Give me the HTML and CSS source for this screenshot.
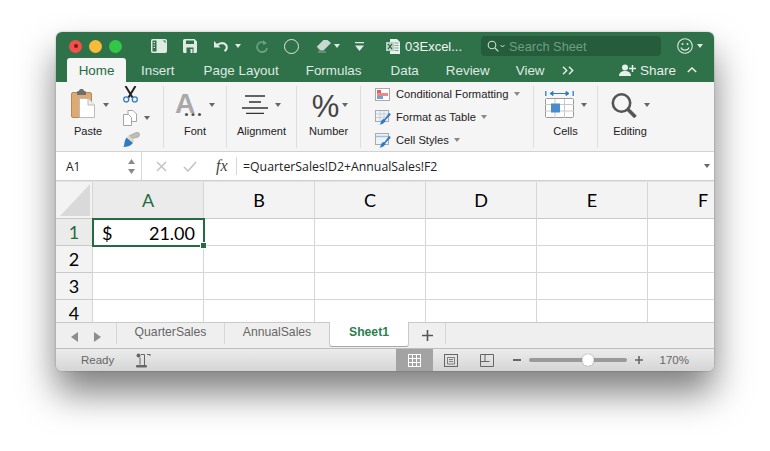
FILE: index.html
```html
<!DOCTYPE html>
<html lang="en">
<head>
    <meta charset="UTF-8">
    <title>03Excel</title>
    <link rel="stylesheet" href="styles.css">
</head>
<body>
<div class="window">
    <div class="titlebar">
        <div class="lights">
            <span class="light red"><i></i></span>
            <span class="light yellow"></span>
            <span class="light green"></span>
        </div>
        <div class="quick">
            <svg class="q-sidebar" width="16" height="14" viewBox="0 0 16 14"><rect x=".75" y=".75" width="14.5" height="12.5" rx="1" fill="none" stroke="#dfeae3" stroke-width="1.5"/><path d="M5.5 1h6l3.5 3.500v8.500h-9.500z" fill="#dfeae3"/><path d="M2.500 3.500h1.500M2.500 6h1.500M2.500 8.500h1.500" stroke="#dfeae3"/></svg>
            <svg class="q-save" width="14" height="14" viewBox="0 0 14 14"><path d="M1.500 0h10l2.500 2.500v10a1.500 1.500 0 0 1-1.500 1.500h-11a1.500 1.500 0 0 1-1.500-1.500v-11a1.500 1.500 0 0 1 1.500-1.500z" fill="#dfeae3"/><rect x="3" y="1.500" width="8" height="3.500" fill="#2f7149"/><rect x="3.500" y="8.500" width="7" height="5.500" fill="#2f7149"/><rect x="7.500" y="10" width="2" height="4" fill="#dfeae3"/></svg>
            <svg class="q-undo" width="16" height="12" viewBox="0 0 16 12"><path d="M1 1v6.500h6.500z" fill="#dfeae3"/><path d="M3.500 6c2-3 7-4 9.500-1 1.600 2 .8 4.500-1.500 6" fill="none" stroke="#dfeae3" stroke-width="2.200"/></svg>
            <span class="caret light-caret q-undo-caret"></span>
            <svg class="q-redo" width="12" height="14" viewBox="0 0 12 14"><path d="M7 1v5l4-1.500z" fill="#6f9f82"/><path d="M8 3.500c-4-1.500-7 1-7 4.500 0 3 2.500 5 5 5s4.500-1.500 5-4" fill="none" stroke="#6f9f82" stroke-width="1.800"/></svg>
            <span class="q-circle"></span>
            <svg class="q-eraser" width="16" height="14" viewBox="0 0 16 14"><path d="M.5 8l7-7h4l3.500 3-7.500 7.500h-4z" fill="#c9d9cf"/><path d="M.5 8l3.500 3.500" stroke="#2f7149"/><path d="M2 13h8" stroke="#8fb39d"/></svg>
            <span class="caret light-caret q-eraser-caret"></span>
            <svg class="q-custom" width="9" height="9" viewBox="0 0 9 9"><path d="M0 0h9v1.300h-9z" fill="#dfeae3"/><path d="M0 3.500h9l-4.500 5.500z" fill="#dfeae3"/></svg>
        </div>
        <div class="doc">
            <svg width="14" height="15" viewBox="0 0 14 15"><path d="M4 0h7l3 3v12h-10z" fill="#e6efe9"/><path d="M8.500 4h4M8.500 6.500h4M8.500 9h4M8.500 11.500h4" stroke="#7ea78e"/><rect x="0" y="3" width="8" height="9" fill="#b8d0c1"/><path d="M2 5l4 5M6 5l-4 5" stroke="#1f5a37" stroke-width="1.200"/></svg>
            <span>03Excel...</span>
        </div>
        <div class="search">
            <svg width="12" height="12" viewBox="0 0 12 12"><circle cx="5" cy="5" r="3.800" fill="none" stroke="#cfe0d5" stroke-width="1.100"/><path d="M8 8l3.300 3.300" stroke="#cfe0d5" stroke-width="1.200"/></svg>
            <svg class="search-chev" width="5" height="4" viewBox="0 0 5 4"><path d="M.5 1l2 2 2-2" fill="none" stroke="#cfe0d5"/></svg>
            <span>Search Sheet</span>
        </div>
        <svg class="smiley" width="16" height="16" viewBox="0 0 16 16"><circle cx="8" cy="8" r="7.300" fill="none" stroke="#dfeae3" stroke-width="1.100"/><circle cx="5.500" cy="6" r="1" fill="#dfeae3"/><circle cx="10.500" cy="6" r="1" fill="#dfeae3"/><path d="M4 9.500c1 3.500 7 3.500 8 0" fill="none" stroke="#dfeae3" stroke-width="1.100"/></svg>
        <span class="caret light-caret smiley-caret"></span>
    </div>

    <div class="tabs">
        <span class="tab active">Home</span>
        <span class="tab wide-gap">Insert</span>
        <span class="tab">Page Layout</span>
        <span class="tab wide-gap">Formulas</span>
        <span class="tab">Data</span>
        <span class="tab narrow-gap">Review</span>
        <span class="tab">View</span>
        <svg class="more" width="12" height="9" viewBox="0 0 12 9"><path d="M1 .8l3.700 3.700-3.700 3.700M7 .8l3.700 3.700-3.700 3.700" fill="none" stroke="#dfeae3" stroke-width="1.500"/></svg>
        <div class="share">
            <svg width="17" height="13" viewBox="0 0 17 13"><circle cx="6" cy="3.500" r="3" fill="#e6efe9"/><path d="M0 12c0-3.500 2.500-5 6-5s6 1.500 6 5z" fill="#e6efe9"/><path d="M13.500 1v7M10 4.500h7" stroke="#e6efe9" stroke-width="1.500"/></svg>
            <span>Share</span>
            <svg class="share-up" width="10" height="6" viewBox="0 0 10 6"><path d="M.8 5l4.200-4 4.200 4" fill="none" stroke="#e6efe9" stroke-width="1.500"/></svg>
        </div>
    </div>

    <div class="ribbon">
        <div class="group g-clip">
            <div class="big-btn paste-btn">
                <div class="big-icon">
                    <svg width="24" height="29" viewBox="0 0 24 29"><rect x=".5" y="3.500" width="20" height="25" rx="1.500" fill="#dcaa72" stroke="#b88a55"/><path d="M6 3c0-1 1-1 2-1 .3-1.500 1-2 2.500-2s2.300.5 2.500 2c1 0 2 0 2 1v3h-9z" fill="#6e6e6e"/><path d="M8.500 9.500h8.500l6.500 6.500v12.500h-15z" fill="#fff" stroke="#bbb"/><path d="M17 9.500v6.500h6.500" fill="#eee" stroke="#bbb"/></svg>
                    <span class="caret"></span>
                </div>
                <label>Paste</label>
            </div>
            <div class="clip-tools">
                <svg width="15" height="17" viewBox="0 0 15 17"><path d="M2.500 0l7 11.500M12.500 0l-7 11.500" stroke="#222" stroke-width="2"/><circle cx="3.200" cy="13.400" r="2.500" fill="none" stroke="#2f7bc4" stroke-width="1.300"/><circle cx="11.800" cy="13.400" r="2.500" fill="none" stroke="#2f7bc4" stroke-width="1.300"/></svg>
                <div class="copy-row">
                    <svg width="14" height="16" viewBox="0 0 14 16"><path d="M5 .5h5l3.500 3.500v7.500h-8.500z" fill="#fff" stroke="#a5a5a5"/><path d="M.5 4.500h5l3 3v8h-8z" fill="#fff" stroke="#a5a5a5"/></svg>
                    <span class="caret"></span>
                </div>
                <svg width="17" height="15" viewBox="0 0 17 15"><path d="M9.500 6.500l-3-3 5.500-2.500c1.200-.8 3-1 4 0s.3 2.800-.5 4z" fill="#bdbdbd" stroke="#8c8c8c" stroke-width=".5"/><path d="M5.500 3.500l6 5.500-1.500 1.500-6-5.500z" fill="#e3d5ae"/><path d="M3.500 5.500l6.500 5.500c-2.500 3-6 4-10 4 1.500-1 1-2.500 1.500-4.500s1-3.500 2-5z" fill="#2f7bc4"/></svg>
            </div>
        </div>
        <div class="group g-font">
            <div class="big-btn">
                <div class="big-icon">
                    <svg class="font-icon" width="27" height="24" viewBox="0 0 27 24"><text x="0" y="20" class="font-a">A</text><circle cx="11.500" cy="21.500" r="1.600" fill="#555"/><circle cx="18" cy="21.500" r="1.600" fill="#555"/><circle cx="24.500" cy="21.500" r="1.600" fill="#555"/></svg>
                    <span class="caret"></span>
                </div>
                <label>Font</label>
            </div>
        </div>
        <div class="group g-align">
            <div class="big-btn">
                <div class="big-icon">
                    <svg class="align-icon" width="26" height="19" viewBox="0 0 26 19"><path d="M3 1h20M7 7h12M0 13h26M4 18.500h18" stroke="#333" stroke-width="1.500"/></svg>
                    <span class="caret"></span>
                </div>
                <label>Alignment</label>
            </div>
        </div>
        <div class="group g-number">
            <div class="big-btn">
                <div class="big-icon">
                    <span class="percent">%</span>
                    <span class="caret"></span>
                </div>
                <label>Number</label>
            </div>
        </div>
        <div class="group g-styles">
            <div class="style-row">
                <svg width="16" height="13" viewBox="0 0 16 13"><rect x=".5" y=".5" width="14" height="12" fill="#fff" stroke="#aaa"/><rect x="2" y="2" width="4" height="3" fill="#d9655f"/><rect x="2" y="5" width="11" height="3" fill="#e88"/><rect x="2" y="8" width="6" height="3" fill="#6fa3d8"/></svg>
                <span>Conditional Formatting</span><span class="caret small"></span>
            </div>
            <div class="style-row">
                <svg width="16" height="15" viewBox="0 0 16 15"><rect x=".5" y=".5" width="13" height="11" fill="#eef3f9" stroke="#aaa"/><path d="M1 4h12M1 7.500h12M5 1v10M9 1v10" stroke="#b9c3cf" stroke-width=".7"/><path d="M14 3c1 0 2 1 1.500 2l-5 5c0 2.500-3 4.500-6 4.500 1.500-1 1-2.500 2-4s2-1.500 3-1.500z" fill="#2f7bc4"/></svg>
                <span>Format as Table</span><span class="caret small"></span>
            </div>
            <div class="style-row">
                <svg width="16" height="15" viewBox="0 0 16 15"><rect x=".5" y=".5" width="13" height="11" fill="#eef3f9" stroke="#aaa"/><path d="M1 3.500h12" stroke="#9dbfe2" stroke-width="1.500"/><path d="M14 3c1 0 2 1 1.500 2l-5 5c0 2.500-3 4.500-6 4.500 1.500-1 1-2.500 2-4s2-1.500 3-1.500z" fill="#2f7bc4"/></svg>
                <span>Cell Styles</span><span class="caret small"></span>
            </div>
        </div>
        <div class="group g-cells">
            <div class="big-btn">
                <div class="big-icon">
                    <svg class="cells-icon" width="29" height="27" viewBox="0 0 29 27"><path d="M.8 0v5M28.200 0v5" stroke="#2f7bc4" stroke-width="1.300"/><path d="M5 2.500h19M5 2.500l3-2v4zM24 2.500l-3-2v4z" fill="#2f7bc4" stroke="#2f7bc4"/><rect x=".5" y="7.500" width="28" height="19" rx="1" fill="#fff" stroke="#999"/><path d="M0 13.500h29M0 20h29M10 8v19M19.500 8v19" stroke="#c8c8c8"/><rect x="6" y="12.500" width="9" height="9" fill="#4a8bcb"/></svg>
                    <span class="caret"></span>
                </div>
                <label>Cells</label>
            </div>
        </div>
        <div class="group g-editing">
            <div class="big-btn">
                <div class="big-icon">
                    <svg class="edit-icon" width="26" height="25" viewBox="0 0 26 25"><circle cx="10.500" cy="10" r="8.700" fill="none" stroke="#555" stroke-width="2.600"/><path d="M16.500 16l8 8" stroke="#555" stroke-width="3.600"/></svg>
                    <span class="caret"></span>
                </div>
                <label>Editing</label>
            </div>
        </div>
    </div>

    <div class="formula-bar">
        <div class="name-box">
            <span>A1</span>
            <svg width="7" height="15" viewBox="0 0 7 15"><path d="M3.500 0l3.500 5h-7zM3.500 15l3.500-5h-7z" fill="#8a8a8a"/></svg>
        </div>
        <div class="formula-tools">
            <svg width="11" height="11" viewBox="0 0 11 11"><path d="M1 1l9 9M10 1l-9 9" stroke="#c4c4c4" stroke-width="1.600"/></svg>
            <svg width="14" height="11" viewBox="0 0 14 11"><path d="M1 6l4 4 8-9" fill="none" stroke="#c4c4c4" stroke-width="1.600"/></svg>
            <span class="fx">fx</span>
        </div>
        <div class="formula-text">=QuarterSales!D2+AnnualSales!F2</div>
        <span class="caret formula-caret"></span>
    </div>

    <div class="sheet">
        <div class="corner"><span></span></div>
        <div class="col on">A</div>
        <div class="col">B</div>
        <div class="col">C</div>
        <div class="col">D</div>
        <div class="col">E</div>
        <div class="col">F</div>

        <div class="row on">1</div>
        <div class="cell selected"><span>$</span><span>21.00</span></div>
        <div class="cell"></div><div class="cell"></div><div class="cell"></div><div class="cell"></div><div class="cell"></div>

        <div class="row">2</div>
        <div class="cell"></div><div class="cell"></div><div class="cell"></div><div class="cell"></div><div class="cell"></div><div class="cell"></div>

        <div class="row">3</div>
        <div class="cell"></div><div class="cell"></div><div class="cell"></div><div class="cell"></div><div class="cell"></div><div class="cell"></div>

        <div class="row last">4</div>
        <div class="cell last"></div><div class="cell last"></div><div class="cell last"></div><div class="cell last"></div><div class="cell last"></div><div class="cell last"></div>
    </div>

    <div class="sheet-tabs">
        <div class="nav">
            <svg width="7" height="10" viewBox="0 0 7 10"><path d="M7 0v10l-7-5z" fill="#8d8d8d"/></svg>
            <svg width="7" height="10" viewBox="0 0 7 10"><path d="M0 0v10l7-5z" fill="#8d8d8d"/></svg>
        </div>
        <div class="sheet-tab t-quarter">QuarterSales</div>
        <div class="sheet-tab t-annual">AnnualSales</div>
        <div class="sheet-tab t-active">Sheet1</div>
        <div class="sheet-tab t-add">
            <svg width="11" height="11" viewBox="0 0 11 11"><path d="M5.500 0v11M0 5.500h11" stroke="#555" stroke-width="1.600"/></svg>
        </div>
    </div>

    <div class="statusbar">
        <span class="ready">Ready</span>
        <svg class="macro" width="15" height="15" viewBox="0 0 15 15"><circle cx="2.500" cy="2.500" r="2" fill="#666"/><path d="M5 1.500h3.500v11M14 1v2M11 1.500h3M4 4.500v7" fill="none" stroke="#666"/><rect x="0" y="12" width="11" height="2.500" rx="1" fill="#666"/></svg>
        <div class="views">
            <div class="view on">
                <svg width="13" height="13" viewBox="0 0 13 13"><path d="M.5 0v13M4.500 0v13M8.500 0v13M12.500 0v13M0 .5h13M0 4.500h13M0 8.500h13M0 12.500h13" stroke="#fff"/></svg>
            </div>
            <div class="view">
                <svg width="14" height="13" viewBox="0 0 14 13"><rect x=".5" y=".5" width="13" height="12" fill="none" stroke="#666"/><path d="M3.500 3.500h7v6.500h-7zM5 5.500h4M5 7.500h4" fill="none" stroke="#666" stroke-width=".8"/></svg>
            </div>
            <div class="view">
                <svg width="14" height="13" viewBox="0 0 14 13"><path d="M.5 .5h13v12h-13zM.5 7.500h9M5 .5v7" fill="none" stroke="#666"/></svg>
            </div>
        </div>
        <div class="zoom">
            <span class="zoom-minus"></span>
            <div class="slider"><span class="thumb"></span></div>
            <svg width="10" height="10" viewBox="0 0 10 10"><path d="M5 1v8M1 5h8" stroke="#666" stroke-width="1.600"/></svg>
            <span class="zoom-val">170%</span>
        </div>
    </div>
</div>
</body>
</html>
```

FILE: styles.css
```css
html, body {
    margin: 0;
    padding: 0;
    background-color: #fff;
    height: 451px;
    overflow: hidden;
}
body {
    font-family: 'Liberation Sans', Arial, sans-serif;
    padding: 32px 56px 0;
    box-sizing: border-box;
}
.window {
    width: 658px;
    height: 339px;
    border-radius: 6px;
    overflow: hidden;
    background-color: #f5f5f5;
    box-shadow: 0 22px 36px rgba(0, 0, 0, 0.5), 0 0 2px rgba(0, 0, 0, 0.3);
}

/* title bar */
.titlebar {
    height: 26px;
    background-color: #2f7149;
    display: flex;
    align-items: center;
    color: #fff;
    padding-top: 2px;
    box-sizing: border-box;
}
.lights {
    display: flex;
    gap: 7px;
    padding-left: 13px;
    width: 82px;
    box-sizing: border-box;
}
.light {
    width: 13px;
    height: 13px;
    border-radius: 50%;
    display: flex;
    align-items: center;
    justify-content: center;
}
.light i {
    width: 4px;
    height: 4px;
    border-radius: 50%;
    background-color: #7a1a14;
}
.red { background-color: #f4504a; }
.yellow { background-color: #f6bb3a; }
.green { background-color: #33c748; }
.quick {
    display: flex;
    align-items: center;
    width: 248px;
    flex: none;
    padding-left: 13px;
    box-sizing: border-box;
}
.q-save { margin-left: 16px; }
.q-undo { margin-left: 16px; }
.q-undo-caret { margin-left: 6px; }
.q-redo { margin-left: 15px; }
.q-circle {
    width: 13px;
    height: 13px;
    border: 1.500px solid #dfeae3;
    border-radius: 50%;
    margin-left: 16px;
}
.q-eraser { margin-left: 17px; }
.q-eraser-caret { margin-left: 2px; }
.q-custom { margin-left: 15px; }
.caret {
    display: inline-block;
    width: 0;
    height: 0;
    border-left: 3.500px solid transparent;
    border-right: 3.500px solid transparent;
    border-top: 4px solid #666;
    flex: none;
}
.caret.small {
    border-left-width: 3px;
    border-right-width: 3px;
    border-top: 4px solid #888;
}
.light-caret { border-top-color: #dfeae3; }
.doc {
    display: flex;
    align-items: center;
    gap: 5px;
    width: 95px;
    flex: none;
    font-size: 13px;
    color: #f3f7f4;
}
.search {
    width: 180px;
    height: 20px;
    flex: none;
    background-color: #255c3b;
    border-radius: 4px;
    display: flex;
    align-items: center;
    padding-left: 6px;
    box-sizing: border-box;
    color: #6f9f82;
    font-size: 12.800px;
}
.search-chev { margin: 0 4px 0 1px; }
.smiley { margin-left: 16px; }
.smiley-caret { margin-left: 4px; }

/* ribbon tabs */
.tabs {
    height: 24px;
    background-color: #2f7149;
    display: flex;
    align-items: flex-end;
    padding-left: 11px;
    font-size: 13.400px;
    color: #dfeae3;
}
.tab {
    height: 24px;
    line-height: 25px;
    margin-right: 27px;
}
.tab.wide-gap { margin-right: 29px; }
.tab.narrow-gap { margin-right: 26px; }
.tab.active {
    width: 59px;
    margin-right: 15px;
    text-align: center;
    background-color: #f5f5f5;
    border-radius: 3px 3px 0 0;
    color: #256b42;
}
.more {
    margin-left: -10px;
    margin-bottom: 7px;
}
.share {
    display: flex;
    align-items: center;
    margin-left: auto;
    padding-right: 17px;
    height: 24px;
    color: #e6efe9;
    font-size: 13.500px;
    gap: 4px;
}
.share-up { margin-left: 7px; }

/* ribbon */
.ribbon {
    height: 70px;
    display: flex;
    padding-top: 4px;
    box-sizing: border-box;
    border-bottom: 1px solid #d2d2d2;
    font-size: 11px;
    color: #222;
}
.group {
    height: 62px;
    border-right: 1px solid #dedede;
    box-sizing: border-box;
    flex: none;
    display: flex;
}
.big-btn {
    display: flex;
    flex-direction: column;
    align-items: center;
    justify-content: space-between;
    padding: 3px 0 10px;
    box-sizing: border-box;
    height: 62px;
    width: 100%;
}
.big-btn label {
    line-height: 13px;
}
.big-icon {
    display: flex;
    gap: 7px;
    align-items: flex-start;
    height: 32px;
}
.big-icon .caret { margin-top: 14px; }
.g-clip { width: 108px; padding-left: 15px; }
.paste-btn {
    width: 41px;
    align-items: flex-start;
}
.paste-btn label { margin-left: 3px; }
.paste-btn .big-icon { gap: 8px; }
.clip-tools {
    display: flex;
    flex-direction: column;
    justify-content: space-between;
    align-items: flex-start;
    padding: 0 0 1px 11px;
}
.copy-row {
    display: flex;
    align-items: center;
    gap: 7px;
}
.g-font { width: 63px; }
.font-icon {
    margin-top: 4px;
    overflow: visible;
}
.font-a {
    font-size: 28px;
    fill: #a8a8a8;
    font-family: 'Liberation Sans', sans-serif;
    font-weight: 700;
}
.g-align { width: 70px; }
.align-icon { margin-top: 6px; }
.g-number { width: 64px; }
.g-number .big-icon {
    gap: 3px;
    margin-left: 3px;
}
.percent {
    font-size: 31px;
    line-height: 36px;
    color: #444;
}
.g-styles {
    width: 173px;
    flex-direction: column;
    padding-left: 14px;
    gap: 7px;
}
.style-row {
    height: 16px;
    display: flex;
    align-items: center;
    gap: 5px;
    font-size: 11.200px;
}
.g-cells { width: 64px; }
.cells-icon { margin-top: 2px; }
.g-editing { width: 64px; border-right: none; }
.edit-icon { margin-top: 4px; }

/* formula bar */
.formula-bar {
    height: 29px;
    display: flex;
    align-items: center;
    background-color: #fff;
    border-bottom: 1px solid #cfcfcf;
    box-sizing: border-box;
    font-family: 'Open Sans', sans-serif;
    font-size: 12px;
    color: #222;
}
.name-box {
    width: 86px;
    height: 100%;
    box-sizing: border-box;
    border-right: 1px solid #d8d8d8;
    display: flex;
    align-items: center;
    justify-content: space-between;
    padding: 0 6px 0 10px;
    flex: none;
}
.formula-tools {
    width: 95px;
    height: 18px;
    flex: none;
    display: flex;
    align-items: center;
    box-sizing: border-box;
    padding-left: 14px;
    gap: 16px;
    border-right: 1px solid #d8d8d8;
}
.fx {
    font-family: 'Liberation Serif', serif;
    font-style: italic;
    font-size: 16px;
    color: #444;
    margin-left: 3px;
}
.formula-text {
    padding-left: 6px;
    flex: 1;
    font-size: 12.300px;
}
.formula-caret { margin-right: 4px; }

/* grid */
.sheet {
    height: 141px;
    overflow: hidden;
    display: grid;
    grid-template-columns: 37px repeat(5, 111px) 111px;
    grid-template-rows: 37px 27px 27px 27px 22px;
    background-color: #fff;
    border-top: 1px solid #e3e3e3;
    box-sizing: border-box;
    font-family: Lato, sans-serif;
}
.corner, .col, .row {
    background-color: #f3f3f3;
    border-right: 1px solid #d6d6d6;
    border-bottom: 1px solid #c9c9c9;
    box-sizing: border-box;
}
.corner {
    display: flex;
    align-items: flex-end;
    justify-content: flex-end;
    padding: 0 2px 2px 0;
}
.corner span {
    width: 0;
    height: 0;
    border-left: 30px solid transparent;
    border-bottom: 32px solid #d9d9d9;
}
.col {
    display: flex;
    align-items: center;
    justify-content: center;
    font-size: 18px;
    color: #000;
}
.col.on {
    background-color: #ebebeb;
    color: #256b42;
}
.row {
    display: flex;
    align-items: center;
    justify-content: center;
    font-size: 18px;
    color: #000;
}
.row.on {
    background-color: #ebebeb;
    color: #256b42;
}
.row.last {
    align-items: flex-end;
    line-height: 17px;
    border-bottom: none;
}
.cell {
    border-right: 1px solid #d6d6d6;
    border-bottom: 1px solid #d6d6d6;
    box-sizing: border-box;
}
.cell.last { border-bottom: none; }
.cell.selected {
    position: relative;
    display: flex;
    justify-content: space-between;
    align-items: center;
    padding: 0 8px 0 8px;
    margin: -1px 0 0 -1px;
    border: 2px solid #256b42;
    width: 113px;
    height: 29px;
    font-size: 18px;
    color: #000;
    z-index: 1;
}
.cell.selected::after {
    content: '';
    position: absolute;
    right: -4px;
    bottom: -4px;
    width: 5px;
    height: 5px;
    background-color: #256b42;
    border: 1px solid #fff;
}

/* sheet tabs */
.sheet-tabs {
    height: 27px;
    background-color: #efefef;
    border-top: 1px solid #c9c9c9;
    border-bottom: 1px solid #bdbdbd;
    box-sizing: border-box;
    display: flex;
    align-items: flex-start;
    font-size: 12.200px;
    color: #666;
}
.nav {
    width: 61px;
    height: 21px;
    box-sizing: border-box;
    padding: 9px 0 0 15px;
    display: flex;
    gap: 16px;
    border-right: 1px solid #d6d6d6;
    flex: none;
}
.sheet-tab {
    height: 21px;
    line-height: 19px;
    text-align: center;
    box-sizing: border-box;
    flex: none;
}
.t-quarter { width: 108px; border-right: 1px solid #d6d6d6; }
.t-annual { width: 104px; }
.t-active {
    width: 80px;
    height: 25px;
    background-color: #fff;
    border-left: 1px solid #c9c9c9;
    border-right: 1px solid #c9c9c9;
    border-bottom: 1px solid #a8a8a8;
    margin-top: -1px;
    border-radius: 0 0 3px 3px;
    color: #2c8050;
    font-weight: 700;
    line-height: 21px;
}
.t-add {
    width: 37px;
    border-right: 1px solid #d6d6d6;
    padding-top: 5px;
}

/* status bar */
.statusbar {
    height: 22px;
    background: linear-gradient(#ececec, #d5d5d5);
    display: flex;
    align-items: center;
    font-size: 11.500px;
    color: #666;
}
.ready {
    margin-left: 25px;
    width: 34px;
}
.macro { margin-left: 21px; }
.views {
    display: flex;
    margin-left: 245px;
    height: 22px;
    align-items: center;
}
.view {
    width: 36px;
    height: 22px;
    display: flex;
    align-items: center;
    justify-content: center;
}
.view.on {
    background-color: #a3a3a3;
    width: 37px;
}
.zoom {
    display: flex;
    align-items: center;
    margin-left: auto;
    padding-right: 25px;
}
.zoom-minus {
    width: 8px;
    height: 2px;
    background-color: #666;
    margin-right: 8px;
}
.slider {
    width: 98px;
    height: 4px;
    border-radius: 2px;
    background-color: #9a9a9a;
    position: relative;
    margin-right: 7px;
}
.thumb {
    position: absolute;
    left: 53px;
    top: -4px;
    width: 12px;
    height: 12px;
    border-radius: 50%;
    background-color: #fff;
    box-shadow: 0 0 1px rgba(0, 0, 0, 0.6);
}
.zoom-val {
    margin-left: 16px;
}
```
